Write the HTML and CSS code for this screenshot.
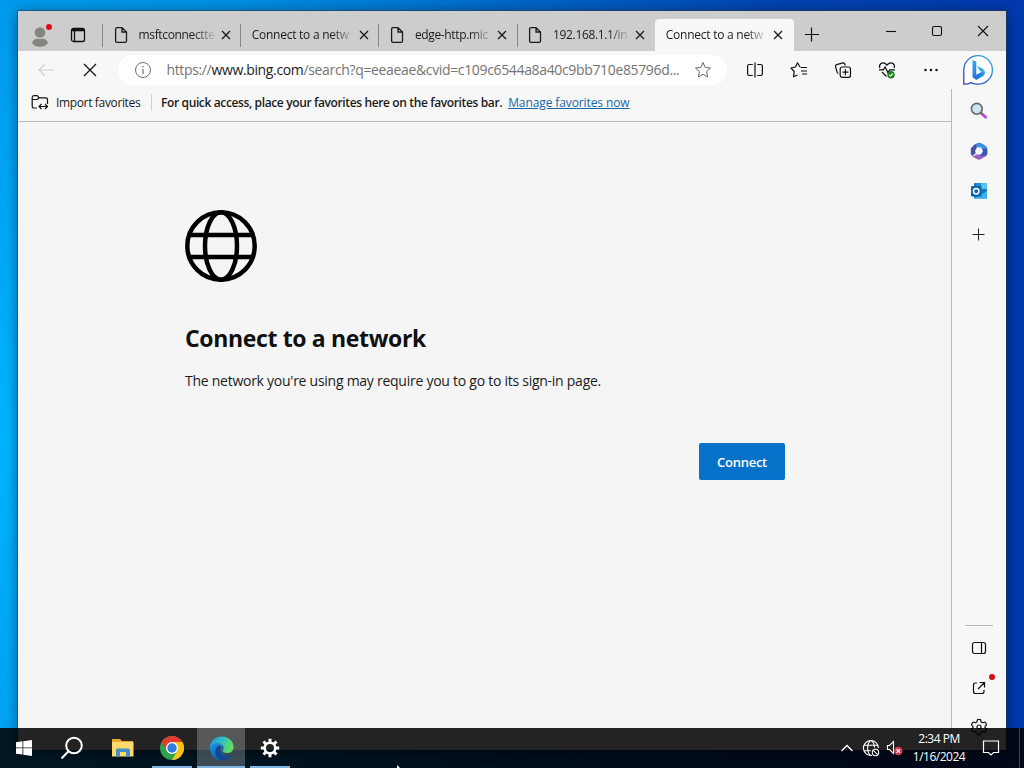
FILE: index.html
```
<!DOCTYPE html>
<html lang="en">
<head>
    <meta charset="UTF-8">
    <meta name="viewport" content="width=device-width, initial-scale=1.0">
    <title>Connect to a network</title>
    <link rel="stylesheet" href="styles.css">
</head>
<body>
    <div class="window">
        <div class="titlebar">
            <div class="profile">
                <svg width="24" height="26" viewBox="0 0 24 26">
                    <circle cx="12" cy="10.500" r="5.300" fill="#85857f"/>
                    <ellipse cx="12" cy="20.500" rx="7.800" ry="4.300" fill="#85857f"/>
                    <path d="M7.500 14.800q4.500 3.500 9 0" stroke="#cdcdcd" fill="none"/>
                    <circle cx="21" cy="5" r="3" fill="#d90b1c"/>
                </svg>
            </div>
            <div class="tab-menu">
                <svg width="16" height="16" viewBox="0 0 16 16" fill="none" stroke="#111" stroke-width="1.300">
                    <rect x="1.500" y="1.500" width="13" height="13" rx="2"/>
                    <path d="M2 3h12" stroke-width="2.600"/>
                    <path d="M4.500 4v10"/>
                </svg>
            </div>
            <div class="tab">
                <svg class="page-icon" width="14" height="18" viewBox="0 0 14 18"><path d="M3 1.600h5L12.500 6v9q0 1.400-1.400 1.400H3Q1.600 16.400 1.600 15V3Q1.600 1.600 3 1.600zM8 1.600V6h4.500"/></svg>
                <span class="tab-title">msftconnectte</span>
                <svg class="tab-close" width="10" height="10" viewBox="0 0 10 10"><path d="M1 1l8 8M9 1l-8 8"/></svg>
            </div>
            <div class="tab plain">
                <span class="tab-title">Connect to a netw</span>
                <svg class="tab-close" width="10" height="10" viewBox="0 0 10 10"><path d="M1 1l8 8M9 1l-8 8"/></svg>
            </div>
            <div class="tab">
                <svg class="page-icon" width="14" height="18" viewBox="0 0 14 18"><path d="M3 1.600h5L12.500 6v9q0 1.400-1.400 1.400H3Q1.600 16.400 1.600 15V3Q1.600 1.600 3 1.600zM8 1.600V6h4.500"/></svg>
                <span class="tab-title">edge-http.mic</span>
                <svg class="tab-close" width="10" height="10" viewBox="0 0 10 10"><path d="M1 1l8 8M9 1l-8 8"/></svg>
            </div>
            <div class="tab">
                <svg class="page-icon" width="14" height="18" viewBox="0 0 14 18"><path d="M3 1.600h5L12.500 6v9q0 1.400-1.400 1.400H3Q1.600 16.400 1.600 15V3Q1.600 1.600 3 1.600zM8 1.600V6h4.500"/></svg>
                <span class="tab-title">192.168.1.1/in</span>
                <svg class="tab-close" width="10" height="10" viewBox="0 0 10 10"><path d="M1 1l8 8M9 1l-8 8"/></svg>
            </div>
            <div class="tab plain active">
                <span class="tab-title">Connect to a netw</span>
                <svg class="tab-close" width="10" height="10" viewBox="0 0 10 10"><path d="M1 1l8 8M9 1l-8 8"/></svg>
            </div>
            <div class="new-tab">
                <svg width="16" height="16" viewBox="0 0 16 16"><path d="M1 7.500h14M7.500 .5v14" stroke="#111" stroke-width="1.200"/></svg>
            </div>
            <div class="window-controls">
                <svg width="12" height="12" viewBox="0 0 12 12"><path d="M1 6.500h10"/></svg>
                <svg width="12" height="12" viewBox="0 0 12 12"><rect x="1.500" y="1.500" width="9" height="9" rx="1.500"/></svg>
                <svg width="12" height="12" viewBox="0 0 12 12"><path d="M1 1l10 10M11 1L1 11"/></svg>
            </div>
        </div>

        <div class="toolbar">
            <div class="tool">
                <svg width="18" height="16" viewBox="0 0 18 16" fill="none" stroke="#cfcfcf" stroke-width="1.200"><path d="M17 8H2M8 2L2 8l6 6"/></svg>
            </div>
            <div class="tool">
                <svg width="14" height="14" viewBox="0 0 14 14" stroke="#111" stroke-width="1.200"><path d="M1 1l12 12M13 1L1 13"/></svg>
            </div>
            <div class="address">
                <svg width="18" height="18" viewBox="0 0 18 18" fill="none" stroke="#707070">
                    <circle cx="9" cy="9" r="7.500"/>
                    <path d="M9 8v5M9 5v1.400" stroke-width="1.200"/>
                </svg>
                <span class="url">https://<b>www.bing.com</b>/search?q=eeaeae&amp;cvid=c109c6544a8a40c9bb710e85796d...</span>
                <svg width="18" height="18" viewBox="0 0 18 18" fill="none" stroke="#666" stroke-linejoin="round"><path d="M9 1.500l2.200 5 5.300.5-4 3.600 1.200 5.400L9 13.200 4.300 16l1.200-5.400-4-3.600 5.300-.5z"/></svg>
            </div>
            <div class="tool">
                <svg width="18" height="18" viewBox="0 0 18 18" fill="none" stroke="#111" stroke-width="1.200"><path d="M6.800 3.500H3.300Q1.600 3.500 1.600 5.200v7.600q0 1.700 1.700 1.700h3.500M11.200 3.500h3.500q1.700 0 1.700 1.700v7.600q0 1.700-1.700 1.700h-3.500M9 1.500v15"/></svg>
            </div>
            <div class="tool">
                <svg width="18" height="18" viewBox="0 0 18 18" fill="none" stroke="#111" stroke-width="1.200" stroke-linejoin="round"><path d="M10.500 6.500H17M11 10h6M12 13h5M10 6L7.500 1.800 5.500 6 1 7l3.200 3.500-.7 5.300L7.500 14"/></svg>
            </div>
            <div class="tool">
                <svg width="18" height="18" viewBox="0 0 18 18" fill="none" stroke="#111" stroke-width="1.200"><path d="M4.500 12.500q-1 0-1.400-1.100L1.500 5.500Q1.300 4 2.600 3.600L9 1.800q1.400-.2 1.800 1.200l.4 1.500"/><rect x="6.200" y="6" width="10.300" height="10.300" rx="2"/><path d="M11.400 8.200v6M8.400 11.200h6"/></svg>
            </div>
            <div class="tool">
                <svg width="18" height="18" viewBox="0 0 18 18" fill="none" stroke="#111" stroke-width="1.200"><path d="M1.800 7Q.8 4.200 3 2.500 6 .8 9 4q3-3.200 6-1.500 2.200 1.700 1.200 4.500M4 11l4.500 4.500M1 8.800h4.300L7.200 6l2.600 5.500 2-2.700H17"/><circle cx="13" cy="13.800" r="3.700" fill="#13831b" stroke="none"/><path d="M11.300 13.800l1.300 1.200 2.200-2.400" stroke="#fff"/></svg>
            </div>
            <div class="tool">
                <svg width="16" height="4" viewBox="0 0 16 4" fill="#111"><circle cx="2.500" cy="2" r="1.250"/><circle cx="8" cy="2" r="1.250"/><circle cx="13.500" cy="2" r="1.250"/></svg>
            </div>
            <div class="bing">
                <svg width="32" height="32" viewBox="0 0 32 32">
                    <defs>
                        <linearGradient id="bubble" x1="0" y1="1" x2="1" y2="0"><stop offset="0" stop-color="#3b40a8"/><stop offset=".5" stop-color="#2476d2"/><stop offset="1" stop-color="#3eb6e8"/></linearGradient>
                        <linearGradient id="bee" x1="0" y1="0" x2="1" y2="1"><stop offset="0" stop-color="#39b4f0"/><stop offset=".6" stop-color="#2170dd"/><stop offset="1" stop-color="#35c4e4"/></linearGradient>
                    </defs>
                    <path d="M1.800 30.200V16A14.300 14.300 0 1 1 16 30.200q-4 0-7-1.600-3 1.800-7.200 1.600z" fill="#fff" stroke="url(#bubble)" stroke-width="1.300"/>
                    <path d="M10.500 6l3.800 1.500v13.300l7.700-4q2 3.500-1 5.400L14.300 26l-3.800-2.800z" fill="url(#bee)"/>
                    <path d="M15 12l5.300 2.500q2.900 1.600 2.600 5.500l-5.100-3.300z" fill="#37a9f0"/>
                </svg>
            </div>
        </div>

        <div class="window-body">
            <div class="main">
                <div class="favorites-bar">
                    <svg width="18" height="16" viewBox="0 0 18 16" fill="none" stroke="#111" stroke-width="1.200"><path d="M6 14H3q-1.800 0-1.800-1.800V3.500Q1.200 1.600 3 1.600h3.200l2 2.200h6.600q1.700 0 1.700 1.700V10M1.200 5.500h5l2-1.700M8 12.500h8.500M10.500 10L8 12.500l2.500 2.500M14 10l2.500 2.500L14 15"/></svg>
                    <span class="import">Import favorites</span>
                    <span class="favorites-hint">For quick access, place your favorites here on the favorites bar.</span>
                    <a class="manage" href="#">Manage favorites now</a>
                </div>
                <div class="page">
                    <svg class="globe" width="72" height="72" viewBox="0 0 72 72" fill="none" stroke="#000" stroke-width="4.500">
                        <circle cx="36" cy="36" r="33.700"/>
                        <ellipse cx="36" cy="36" rx="16" ry="33.700"/>
                        <path d="M5 25h62M5 47h62"/>
                    </svg>
                    <h1>Connect to a network</h1>
                    <p>The network you're using may require you to go to its sign-in page.</p>
                    <button class="connect">Connect</button>
                </div>
            </div>
            <div class="sidebar">
                <svg class="side-search" width="18" height="18" viewBox="0 0 18 18"><path d="M11.500 11.500l5 4.500" stroke="#b14ee8" stroke-width="3"/><path d="M10.500 10.500l2 2" stroke="#666" stroke-width="2"/><circle cx="6.800" cy="6.800" r="5.400" fill="#c9e6ee" stroke="#666" stroke-width="1.600"/></svg>
                <svg class="side-office" width="18" height="18" viewBox="0 0 18 18">
                    <path d="M4.500 2.600L9.500.8 7 5.500 5.700 11 2.600 14 .8 12.500V6.200z" fill="#4a52a8"/>
                    <path d="M6.500 1.500Q9 0 12 1.500l4 2.500q1.300 1 1.200 3v5L12.500 9 11 5.800 6 5z" fill="#3f8fe0"/>
                    <path d="M17.200 8v4.500q-.3 1-1.500 1.800l-5 3q-2 .8-4-.2L1.500 14q2.500.8 4.500-1.500L12 12z" fill="#9b5fc4"/>
                    <path d="M12.500 7l4.700-.5v5q-.3 2-3 2.500L10 14z" fill="#3b56b8"/>
                    <path d="M6.800 5.800h4.400L13 9l-1.800 3.200H6.800L5 9z" fill="#f7f7f7"/>
                </svg>
                <svg class="side-outlook" width="18" height="18" viewBox="0 0 18 18"><path d="M5 1h11q1 0 1 1v13.500q0 1-1 1H5q-1 0-1-1V2q0-1 1-1z" fill="#1777bd"/><path d="M6 1h5v6H6z" fill="#1f8bd4"/><path d="M11 1h6v6h-6z" fill="#4ec4ee"/><path d="M4 16.500L17 9v7.500z" fill="#39b2ea"/><rect x="1" y="4" width="10.500" height="10.500" rx="1" fill="#0867ae"/><circle cx="6.200" cy="9.200" r="2.700" fill="none" stroke="#fff" stroke-width="1.500"/></svg>
                <svg class="side-add" width="14" height="14" viewBox="0 0 14 14"><path d="M.5 7.500h12M6.500 1.500v12" stroke="#222"/></svg>
                <div class="side-bottom">
                    <svg width="16" height="16" viewBox="0 0 16 16" fill="none" stroke="#111" stroke-width="1.200"><rect x="1.500" y="2.500" width="13" height="11" rx="2"/><path d="M10.500 2.500v11"/></svg>
                    <div class="open-link">
                        <svg width="16" height="16" viewBox="0 0 16 16" fill="none" stroke="#111" stroke-width="1.200"><path d="M6 3H4.500Q2.500 3 2.500 5v6.500q0 2 2 2H11q2 0 2-2V10M8.500 2.500h5v5M13.500 2.500L7 9"/></svg>
                        <span class="dot"></span>
                    </div>
                    <svg width="18" height="18" viewBox="0 0 18 18" fill="none" stroke="#111" stroke-width="1.200" stroke-linejoin="round"><path d="M7.500 1.500h3l.6 2.400 1.500.9L15 4l1.700 2.700L15 8.400v1.300l1.700 1.600L15 14l-2.400-.7-1.500.9-.6 2.400h-3l-.6-2.400-1.500-.9L3 14l-1.700-2.700L3 9.700V8.400L1.300 6.700 3 4l2.400.8 1.500-.9z"/><circle cx="9" cy="9" r="2"/></svg>
                </div>
            </div>
        </div>
    </div>

    <div class="taskbar">
        <div class="task">
            <svg width="16" height="16" viewBox="0 0 16 16" fill="#fff"><path d="M0 2.200l6.500-.9v6.200H0zM7.300 1.200L16 0v7.500H7.300zM0 8.300h6.500v6.300L0 13.700zM7.300 8.300H16V16l-8.700-1.300z"/></svg>
        </div>
        <div class="task">
            <svg class="task-search" width="24" height="24" viewBox="0 0 24 24" fill="none" stroke="#fff" stroke-width="2"><circle cx="14" cy="9.500" r="7.800"/><path d="M8.500 15.200L1.500 22.500"/></svg>
        </div>
        <div class="task">
            <svg width="22" height="20" viewBox="0 0 22 20"><path d="M0 1h8l2 2h11v15H0z" fill="#e9a92e"/><path d="M0 4h21.500v14.500H0z" fill="#ffd969"/><path d="M4 18.500V12q0-1.500 1.500-1.500h11Q18 10.500 18 12v6.500h-4V14H8v4.500z" fill="#4190c8"/></svg>
        </div>
        <div class="task running">
            <svg width="24" height="24" viewBox="0 0 24 24"><circle cx="12" cy="12" r="12" fill="#2ba24c"/><path d="M1.600 6A12 12 0 0 1 22.400 6H12L6.800 15z" fill="#e33b2e"/><path d="M22.400 6A12 12 0 0 1 12 24l5.200-9L12 6z" fill="#fbc116"/><circle cx="12" cy="12" r="6" fill="#fff"/><circle cx="12" cy="12" r="4.700" fill="#2f7de1"/></svg>
        </div>
        <div class="task running current">
            <svg width="25" height="25" viewBox="0 0 25 25">
                <defs>
                    <linearGradient id="edgeTop" x1="0" y1="0" x2="1" y2=".3"><stop offset="0" stop-color="#1c8fd6"/><stop offset=".5" stop-color="#2dbdd0"/><stop offset="1" stop-color="#62dc62"/></linearGradient>
                    <linearGradient id="edgeSide" x1="0" y1="0" x2=".5" y2="1"><stop offset="0" stop-color="#1b93dd"/><stop offset="1" stop-color="#0f5eb0"/></linearGradient>
                </defs>
                <path d="M.8 11.500C.5 18.500 6 24.500 12.800 24.500q6.500 0 10-5.200c-4 2-10 .5-10-4.500 0-1.500 1-2.300 1-3.300C13.500 6.500 3 5.500.8 11.500z" fill="url(#edgeSide)"/>
                <path d="M10 9.200Q5.800 12 6.300 17q.7 5.500 7 7.500 6.500-.6 9.500-5.200-4.500 1.800-8 .2-3.500-2-3.300-5.500 0-1.800 1.400-2.600z" fill="#14498f"/>
                <path d="M.7 12C1 5 6.300.6 12.600.6c7 0 12 5 12 10.400 0 4-3 6-6.500 6-2.800 0-4.400-1-4.400-2 0-.8 1-1.200 1-3 0-2.500-2.800-4.700-6.500-4.700Q3.500 7.300.7 12z" fill="url(#edgeTop)"/>
            </svg>
        </div>
        <div class="task running">
            <svg width="20" height="20" viewBox="0 0 20 20" fill="none" stroke="#fff"><circle cx="10" cy="10" r="5.300" stroke-width="2.600"/><path d="M10 .8v3.500M10 15.700v3.500M.8 10h3.500M15.700 10h3.500M3.500 3.500L6 6M14 14l2.500 2.500M16.500 3.500L14 6M6 14l-2.500 2.500" stroke-width="3"/></svg>
        </div>
        <div class="tray">
            <svg width="14" height="10" viewBox="0 0 14 10" fill="none" stroke="#fff" stroke-width="1.300"><path d="M1.500 8L7 2.500 12.500 8"/></svg>
            <svg class="tray-net" width="18" height="18" viewBox="0 0 18 18" fill="none" stroke="#fff" stroke-width="1.100"><path d="M10 16.400A7.500 7.500 0 1 1 16.400 9M9 16.500C4.500 14 4.500 4 9 1.500M9 1.500q3.500 2 3.500 7M2 6.200h14M2 11.800h7"/><circle cx="13.500" cy="13.500" r="3.200"/><path d="M11.300 11.300l4.400 4.400"/></svg>
            <svg class="tray-sound" width="18" height="16" viewBox="0 0 18 16"><path d="M1.500 5.500h2l4-4v12l-4-4h-2z" fill="none" stroke="#fff" stroke-width="1.100"/><circle cx="12.300" cy="11" r="4.300" fill="#d5354a"/><path d="M10.500 9.200l3.600 3.600M14.100 9.200l-3.600 3.600" stroke="#fff" stroke-width="1.200"/></svg>
            <div class="clock">
                <span>2:34 PM</span>
                <span>1/16/2024</span>
            </div>
            <svg class="tray-note" width="18" height="18" viewBox="0 0 18 18" fill="none" stroke="#fff" stroke-width="1.200"><path d="M1.500 2h15v11.500h-5L9 16l-2.500-2.500h-5z"/></svg>
            <div class="show-desktop"></div>
        </div>
    </div>

    <svg class="cursor" width="5" height="4" viewBox="0 0 5 4"><path d="M0 0l4 4H0z" fill="#fff"/></svg>
</body>
</html>
```
FILE: styles.css
```
* {
    box-sizing: border-box;
}

body {
    margin: 0;
    width: 1024px;
    height: 768px;
    overflow: hidden;
    position: relative;
    font-family: 'Open Sans', 'Noto Sans', sans-serif;
    font-size: 12px;
    color: #1b1b1b;
    background:
        radial-gradient(ellipse 260px 420px at 0 440px, #00b4ff, rgba(0, 180, 255, 0)),
        linear-gradient(90deg, #009bee 0, #0090e2 230px, #0067c8 510px, #0043b0 780px, #0039ae 1024px);
}

svg {
    display: block;
    flex: none;
}

/* Browser window */
.window {
    position: absolute;
    left: 18px;
    top: 11px;
    width: 988px;
    height: 739px;
    display: flex;
    flex-direction: column;
    background: #f7f7f7;
    box-shadow: 0 0 0 1px rgba(40, 60, 80, 0.55), 0 2px 12px rgba(0, 0, 0, 0.5);
}

.titlebar {
    height: 40px;
    flex: none;
    display: flex;
    align-items: center;
    background: #cdcdcd;
    padding-top: 8px;
}

.profile {
    width: 44px;
    padding-left: 10px;
}

.tab-menu {
    width: 40px;
    padding-left: 8px;
}

.tab {
    width: 138.2px;
    height: 32px;
    display: flex;
    align-items: center;
    padding: 0 9.5px 0 11.5px;
    background: linear-gradient(#888, #888) 0 5px / 1px 23px no-repeat;
}

.tab-title {
    flex: 1;
    white-space: nowrap;
    line-height: 20px;
    letter-spacing: -0.35px;
    -webkit-mask-image: linear-gradient(90deg, #000 55px, transparent 78px);
    mask-image: linear-gradient(90deg, #000 55px, transparent 78px);
}

.plain .tab-title {
    letter-spacing: -0.25px;
    -webkit-mask-image: linear-gradient(90deg, #000 80px, transparent 102px);
    mask-image: linear-gradient(90deg, #000 80px, transparent 102px);
}

.page-icon {
    margin-right: 11px;
    fill: none;
    stroke: #1b1b1b;
    stroke-width: 1.3;
}

.tab-close {
    stroke: #1b1b1b;
    stroke-width: 1.3;
}

.tab.active {
    background: #f7f7f7;
    border-radius: 4px 4px 0 0;
    width: 139px;
    padding: 0 10.5px 0 11px;
}

.new-tab {
    width: 36px;
    padding-left: 10px;
}

.window-controls {
    margin-left: auto;
    display: flex;
    gap: 34px;
    padding: 0 17px 8px 0;
    fill: none;
    stroke: #111;
    stroke-width: 1.1;
}

/* Toolbar */
.toolbar {
    height: 38px;
    flex: none;
    display: flex;
    align-items: center;
    padding-left: 6px;
}

.tool {
    width: 44px;
    display: flex;
    justify-content: center;
}

.address {
    width: 609px;
    height: 30px;
    margin: 0 6px 0 6.5px;
    padding: 0 15px 0 16px;
    display: flex;
    align-items: center;
    background: #fff;
    border-radius: 15px;
}

.url {
    flex: 1;
    padding-left: 14px;
    font-size: 14px;
    line-height: 20px;
    white-space: nowrap;
    color: #747474;
    letter-spacing: -0.35px;
}

.url b {
    font-weight: 400;
    color: #1b1b1b;
}

.bing {
    width: 53px;
    padding-left: 9.5px;
}

/* Below the toolbar */
.window-body {
    flex: 1;
    display: flex;
}

.main {
    width: 934px;
    display: flex;
    flex-direction: column;
    border-right: 1px solid #bababa;
}

.favorites-bar {
    height: 33px;
    display: flex;
    align-items: center;
    padding: 0 0 6px 13px;
    border-bottom: 1px solid #bababa;
    white-space: nowrap;
}

.import {
    width: 96px;
    margin-left: 7px;
    border-right: 1px solid #d0d0d0;
    letter-spacing: -0.35px;
}

.favorites-hint {
    margin-left: 9px;
    font-weight: 600;
    letter-spacing: -0.37px;
}

.manage {
    margin-left: 6px;
    color: #1a67a8;
    letter-spacing: -0.1px;
}

.page {
    flex: 1;
    padding: 88px 166px 0 167px;
    background: #f5f5f5;
    display: flex;
    flex-direction: column;
    align-items: flex-start;
}

.page h1 {
    margin: 39px 0 0;
    font-size: 23px;
    line-height: 34px;
    font-weight: 700;
    color: #101010;
    letter-spacing: -0.35px;
    white-space: nowrap;
}

.page p {
    margin: 16px 0 0;
    font-size: 14px;
    line-height: 20px;
    letter-spacing: -0.26px;
    white-space: nowrap;
}

.connect {
    width: 86px;
    height: 37px;
    margin: 52px 0 0;
    align-self: flex-end;
    border: none;
    border-radius: 2px;
    background: #0571c8;
    color: #fff;
    font-family: inherit;
    font-size: 13px;
    font-weight: 600;
    letter-spacing: -0.25px;
}

.sidebar {
    width: 54px;
    display: flex;
    flex-direction: column;
    align-items: center;
}

.side-search {
    margin-top: 13px;
}

.side-office {
    margin-top: 22px;
}

.side-outlook {
    margin-top: 22px;
}

.side-add {
    margin-top: 27px;
}

.side-bottom {
    width: 28px;
    height: 125px;
    margin-top: auto;
    padding-top: 14px;
    border-top: 1px solid #bababa;
    display: flex;
    flex-direction: column;
    align-items: center;
    gap: 24px;
}

.side-bottom > svg:last-child {
    margin-top: -2px;
}

.open-link {
    position: relative;
}

.dot {
    position: absolute;
    left: 18px;
    top: -6px;
    width: 6px;
    height: 6px;
    border-radius: 50%;
    background: #d0101c;
}

/* Taskbar */
.taskbar {
    position: absolute;
    left: 0;
    top: 728px;
    width: 1024px;
    height: 40px;
    display: flex;
    gap: 1.25px;
    background: rgba(0, 0, 0, 0.86);
    color: #fff;
}

.task {
    width: 48px;
    display: flex;
    align-items: center;
    justify-content: center;
}

.task-search {
    margin-right: 3px;
}

.running {
    background: linear-gradient(#7fb4e3, #7fb4e3) 4px 100% / 40px 2px no-repeat;
}

.running.current {
    background: linear-gradient(#7fb4e3, #7fb4e3) 0 100% / 48px 2px no-repeat, rgba(255, 255, 255, 0.24);
}

.tray {
    margin-left: auto;
    display: flex;
    align-items: center;
}

.tray-net {
    margin-left: 8px;
}

.tray-sound {
    margin-left: 6px;
}

.clock {
    width: 54px;
    margin-left: 8px;
    display: flex;
    flex-direction: column;
    align-items: center;
    line-height: 18px;
    letter-spacing: -0.5px;
    white-space: nowrap;
}

.tray-note {
    margin-left: 16px;
}

.show-desktop {
    width: 5px;
    height: 40px;
    margin-left: 19px;
    border-left: 1px solid #39434e;
}

.cursor {
    position: absolute;
    left: 397px;
    top: 765px;
}
```
